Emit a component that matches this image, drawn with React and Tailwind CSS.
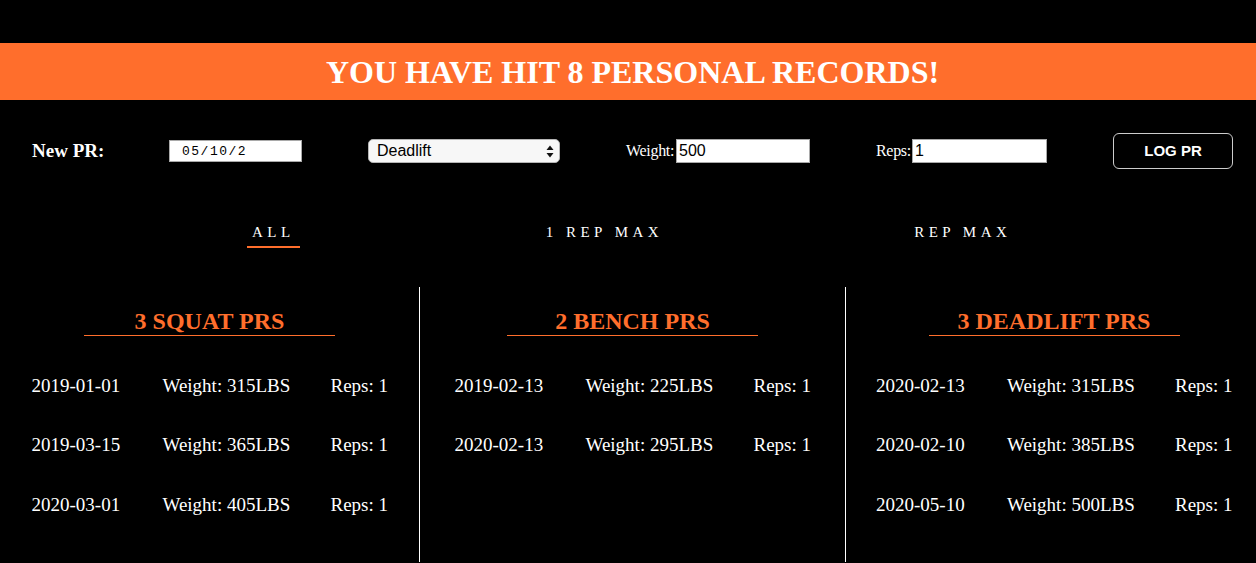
import { useState } from 'react'

const lifts = [
  {
    title: '3 SQUAT PRS',
    width: 'w-[420px] border-r border-white',
    records: [
      { date: '2019-01-01', weight: 315, reps: 1 },
      { date: '2019-03-15', weight: 365, reps: 1 },
      { date: '2020-03-01', weight: 405, reps: 1 },
    ],
  },
  {
    title: '2 BENCH PRS',
    width: 'w-[426px] border-r border-white',
    records: [
      { date: '2019-02-13', weight: 225, reps: 1 },
      { date: '2020-02-13', weight: 295, reps: 1 },
    ],
  },
  {
    title: '3 DEADLIFT PRS',
    width: 'w-[416px]',
    records: [
      { date: '2020-02-13', weight: 315, reps: 1 },
      { date: '2020-02-10', weight: 385, reps: 1 },
      { date: '2020-05-10', weight: 500, reps: 1 },
    ],
  },
]

const tabs = ['ALL', '1 REP MAX', 'REP MAX']

function LiftColumn({ title, width, records }) {
  return (
    <div className={`${width} shrink-0 h-[275px] pt-[20px] flex flex-col items-center`}>
      <h2 className="w-[251px] text-center text-[24px] leading-[28px] font-bold text-[#ff6e2c] border-b border-[#ff6e2c]">
        {title}
      </h2>
      <div className="mt-[20px] flex flex-col">
        {records.map((rec, i) => (
          <div key={i} className="h-[59.5px] flex items-center justify-center text-[19px] leading-[22px] whitespace-nowrap">
            <span className="w-[131px]">{rec.date}</span>
            <span className="w-[168px]">Weight: {rec.weight}LBS</span>
            <span className="w-[57px]">Reps: {rec.reps}</span>
          </div>
        ))}
      </div>
    </div>
  )
}

export default function App() {
  const [activeTab, setActiveTab] = useState('ALL')
  const [weight, setWeight] = useState('500')
  const [reps, setReps] = useState('1')

  return (
    <div className="h-screen overflow-hidden bg-black text-white font-['Liberation_Serif',serif] pt-[43px]">
      <div className="h-[57px] bg-[#ff6e2c] flex items-center justify-center pl-[9px]">
        <h1 className="text-[32px] font-bold leading-none">YOU HAVE HIT 8 PERSONAL RECORDS!</h1>
      </div>

      <form className="pt-[33px] pl-[32px] flex items-center" onSubmit={(e) => e.preventDefault()}>
        <label className="w-[137px] text-[19px] font-bold">New PR:</label>
        <input
          type="text"
          readOnly
          value="05/10/2"
          className="w-[133px] h-[22px] bg-white border border-[#a9a9a9] text-black pl-[12px] text-[13px] tracking-[1.5px] font-['Liberation_Mono',monospace] outline-none"
        />
        <div className="ml-[66px] w-[192px] h-[24px] rounded-[5px] border border-[#b5b5b5] bg-[#f7f7f7] text-black flex items-center justify-between pl-[8px] pr-[5px] font-['Liberation_Sans',sans-serif] text-[16px]">
          <span>Deadlift</span>
          <svg width="8" height="13" viewBox="0 0 8 13" fill="#111">
            <path d="M4 0.5 L7.5 5 L0.5 5 Z" />
            <path d="M4 12.5 L7.5 8 L0.5 8 Z" />
          </svg>
        </div>
        <label className="ml-[66px] w-[50px] text-[16px] tracking-[-0.3px] whitespace-nowrap">Weight:</label>
        <input
          type="text"
          value={weight}
          onChange={(e) => setWeight(e.target.value)}
          className="w-[134px] h-[24px] bg-white border border-[#a9a9a9] text-black pl-[2px] text-[16px] font-['Liberation_Sans',sans-serif] outline-none"
        />
        <label className="ml-[66px] w-[36px] text-[16px] tracking-[-0.3px] whitespace-nowrap">Reps:</label>
        <input
          type="text"
          value={reps}
          onChange={(e) => setReps(e.target.value)}
          className="w-[135px] h-[24px] bg-white border border-[#a9a9a9] text-black pl-[2px] text-[16px] font-['Liberation_Sans',sans-serif] outline-none"
        />
        <button
          type="submit"
          className="ml-[66px] w-[120px] h-[36px] rounded-[6px] border border-[#cccccc] bg-black text-white font-bold text-[15px] font-['Liberation_Sans',sans-serif]"
        >
          LOG PR
        </button>
      </form>

      <div className="mt-[54px] pl-[247px] flex gap-[241px]">
        {tabs.map((tab) => (
          <button
            key={tab}
            onClick={() => setActiveTab(tab)}
            className={`px-[5px] pb-[5px] text-[15px] leading-[18px] tracking-[4.5px] whitespace-nowrap border-b-2 ${activeTab === tab ? 'border-[#ff6e2c]' : 'border-transparent'}`}
          >
            {tab}
          </button>
        ))}
      </div>

      <div className="mt-[39px] flex">
        {lifts.map((lift) => (
          <LiftColumn key={lift.title} {...lift} />
        ))}
      </div>
    </div>
  )
}
